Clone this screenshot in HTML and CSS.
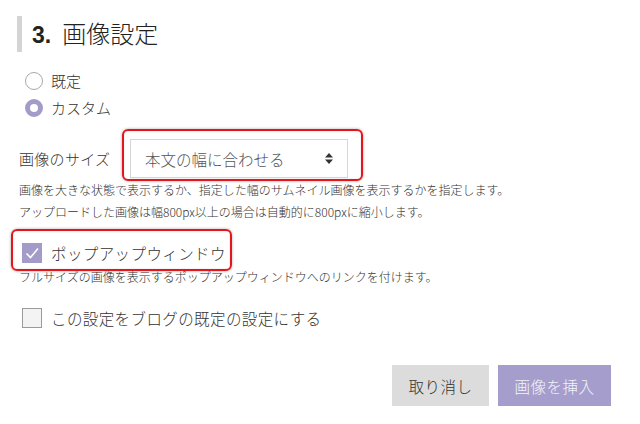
FILE: index.html
```html
<!DOCTYPE html>
<html lang="ja">
<head>
<meta charset="utf-8">
<link rel="stylesheet" href="styles.css">
</head>
<body>
<div class="page">
  <h2 class="heading"><span class="num">3.</span>画像設定</h2>

  <div class="radios">
    <label class="radio-row"><span class="radio"></span>既定</label>
    <label class="radio-row"><span class="radio checked"></span>カスタム</label>
  </div>

  <div class="size-row">
    <span class="size-label">画像のサイズ</span>
    <div class="mark-wrap">
      <span class="mark mark-select"></span>
      <div class="select">
        <span>本文の幅に合わせる</span>
        <svg class="arrows" width="8" height="11" viewBox="0 0 8 11"><path d="M4 0 L8 4.5 H0 Z M0 6.5 H8 L4 11 Z" fill="#333"/></svg>
      </div>
    </div>
  </div>
  <p class="help">画像を大きな状態で表示するか、指定した幅のサムネイル画像を表示するかを指定します。<br>アップロードした画像は幅800px以上の場合は自動的に800pxに縮小します。</p>

  <div class="check-row popup">
    <span class="mark mark-popup"></span>
    <span class="check checked"><svg width="20" height="20" viewBox="0 0 20 20"><path d="M4.5 10.5 L8.5 14.5 L16 5.5" fill="none" stroke="#fff" stroke-width="1.6"/></svg></span>
    <span class="check-text">ポップアップウィンドウ</span>
  </div>
  <p class="help help-single">フルサイズの画像を表示するポップアップウィンドウへのリンクを付けます。</p>

  <div class="check-row default">
    <span class="check"></span>
    <span class="check-text">この設定をブログの既定の設定にする</span>
  </div>

  <div class="buttons">
    <button class="btn btn-cancel">取り消し</button>
    <button class="btn btn-insert">画像を挿入</button>
  </div>
</div>
</body>
</html>
```
FILE: styles.css
```css
html, body {
  margin: 0;
  padding: 0;
  background: #fff;
}
body {
  font-family: "Noto Sans CJK JP", sans-serif;
  font-weight: 300;
  color: #333;
}
.page {
  padding: 16px 29px 0 19px;
}
.heading {
  margin: 0 0 0 -2px;
  height: 36px;
  line-height: 33px;
  border-left: 5px solid #d4d4d4;
  padding-left: 10px;
  font-size: 24px;
  font-weight: 300;
  color: #222;
}
.num {
  font-family: "Liberation Sans", sans-serif;
  font-weight: bold;
  font-size: 23px;
  margin-right: 11px;
}
.radios {
  margin-top: 15px;
  margin-left: 6px;
}
.radio-row {
  display: flex;
  align-items: center;
  height: 27px;
  font-size: 15px;
  gap: 8px;
  color: #333;
}
.radio {
  width: 18px;
  height: 18px;
  box-sizing: border-box;
  border-radius: 50%;
  border: 1px solid #a8a8a8;
  background: #fff;
}
.radio.checked {
  border: 5px solid #a39cc9;
}
.size-row {
  display: flex;
  align-items: center;
  margin-top: 18px;
}
.size-label {
  width: 111px;
  font-size: 15px;
  letter-spacing: 0.3px;
}
.mark-wrap {
  position: relative;
}
.mark {
  position: absolute;
  border: 2px solid #e4161b;
  border-radius: 6px;
  box-shadow: 0 0 3px rgba(0,0,0,0.35), inset 0 0 2px rgba(0,0,0,0.15);
  pointer-events: none;
}
.mark-select {
  left: -8px;
  top: -10px;
  right: -15px;
  bottom: -3px;
}
.select {
  width: 218px;
  height: 39px;
  box-sizing: border-box;
  border: 1px solid #d6d6d6;
  display: flex;
  align-items: center;
  justify-content: space-between;
  padding: 0 14px 0 14px;
  font-size: 15.5px;
  color: #555;
  background: #fff;
}
.arrows {
  display: block;
}
.help {
  margin: 1px 0 0 0;
  font-size: 12px;
  line-height: 22px;
  color: #333;
}
.check-row {
  display: flex;
  align-items: center;
  height: 26px;
  gap: 9px;
  margin-left: 3px;
  font-size: 15.5px;
  position: relative;
}
.check-row.popup {
  margin-top: 17px;
}
.mark-popup {
  left: -11px;
  top: -11px;
  width: 217px;
  height: 38px;
}
.check-text {
  letter-spacing: 0.4px;
}
.help-single {
  margin-top: 0;
}
.check {
  width: 20px;
  height: 20px;
  box-sizing: border-box;
  border: 1px solid #9a9a9a;
  background: #f3f3f3;
  display: block;
}
.check.checked {
  border: none;
  background: #a39cc9;
}
.check svg {
  display: block;
}
.check-row.default {
  margin-top: 17px;
}
.buttons {
  display: flex;
  justify-content: flex-end;
  gap: 9px;
  margin-top: 34px;
}
.btn {
  height: 41px;
  border: none;
  font-family: "Noto Sans CJK JP", sans-serif;
  font-weight: 300;
  font-size: 15.5px;
  padding: 0;
  letter-spacing: 0.5px;
}
.btn-cancel {
  width: 97px;
  background: #dcdcdc;
  color: #333;
}
.btn-insert {
  width: 113px;
  background: #a59dcb;
  color: #f4f4f8;
}
```
